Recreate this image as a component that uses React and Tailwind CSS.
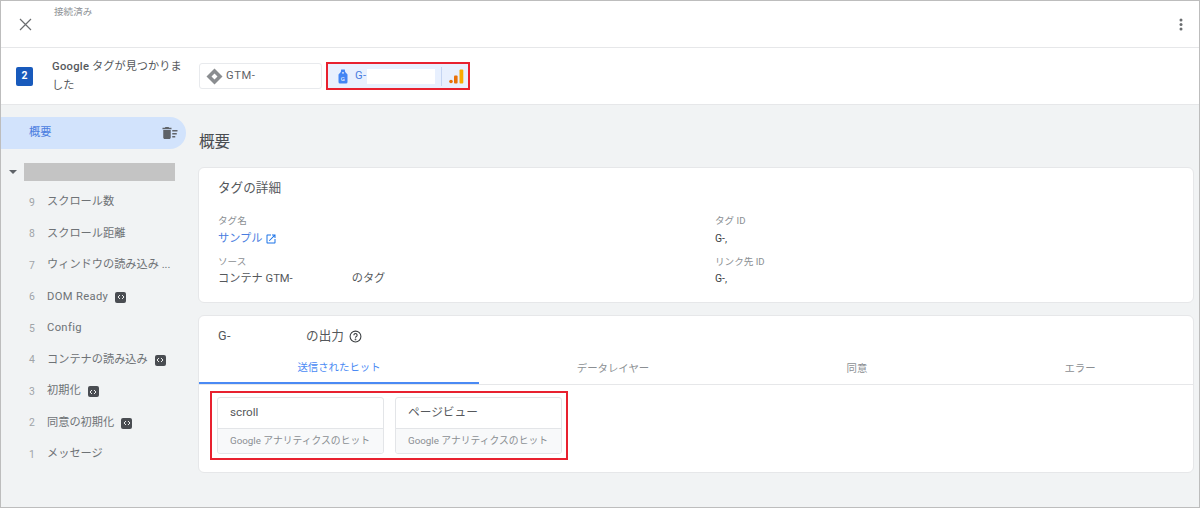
import React from "react";

const FONT = "font-['Roboto','Noto_Sans_CJK_JP',sans-serif]";

function Code() {
  return (
    <span className="ml-[7px] inline-flex h-[11px] w-[11px] items-center justify-center rounded-[2px] bg-[#4a4d52]">
      <svg width="8" height="6" viewBox="0 0 8 6" fill="none" stroke="#fff" strokeWidth="0.9">
        <path d="M3 1 1 3l2 2M5 1l2 2-2 2" />
      </svg>
    </span>
  );
}

function Item({ n, label, code, latin }) {
  return (
    <div className="flex h-[31.5px] items-center pl-[28px] text-[11.2px] text-[#6e7276]">
      <span className="w-[18px] text-[10.4px] text-[#a0a4a8]">{n}</span>
      <span className={latin ? "whitespace-nowrap tracking-[0.35px]" : "whitespace-nowrap"}>{label}</span>
      {code && <Code />}
    </div>
  );
}

function Hit({ title }) {
  return (
    <div className="flex h-[57px] w-[167px] flex-col overflow-hidden rounded-[3px] border border-[#e3e5e8] bg-white">
      <div className="flex h-[31px] items-center border-b border-[#e3e5e8] pl-[12px] text-[11.7px] text-[#55585c]">{title}</div>
      <div className="flex flex-1 items-center bg-[#f8f9fa] pl-[12px] text-[9.8px] text-[#8b8f93]">Google アナリティクスのヒット</div>
    </div>
  );
}

export default function App() {
  const items = [
    [9, "スクロール数"],
    [8, "スクロール距離"],
    [7, "ウィンドウの読み込み ..."],
    [6, "DOM Ready", true, true],
    [5, "Config", false, true],
    [4, "コンテナの読み込み", true],
    [3, "初期化", true],
    [2, "同意の初期化", true],
    [1, "メッセージ"],
  ];
  return (
    <div className={`${FONT} flex h-[508px] w-[1200px] flex-col border border-[#bdbdbd] bg-[#f1f3f4] text-[#3c4043]`}>
      <header className="flex h-[47px] items-center border-b border-[#e6e7e9] bg-white pl-[18px] pr-[16px]">
        <svg width="13" height="13" viewBox="0 0 13 13" stroke="#6a6d70" strokeWidth="1.2" fill="none">
          <path d="M1 1l11 11M12 1 1 12" />
        </svg>
        <span className="ml-[22px] -mt-[24px] text-[9.6px] text-[#909498]">接続済み</span>
        <svg className="ml-auto" width="4" height="13" viewBox="0 0 4 13" fill="#6a6d70">
          <circle cx="2" cy="2" r="1.5" />
          <circle cx="2" cy="6.5" r="1.5" />
          <circle cx="2" cy="11" r="1.5" />
        </svg>
      </header>

      <div className="flex h-[57px] items-center border-b border-[#e6e7e9] bg-white pl-[15px]">
        <span className="flex h-[19px] w-[17px] items-center justify-center rounded-[2px] bg-[#185abc] text-[10.4px] font-bold text-white">2</span>
        <div className="ml-[19px] w-[135px] text-[11.2px] leading-[19px] text-[#55585c]">
          <div className="whitespace-nowrap"><span className="font-medium tracking-[0.3px]">Google</span> タグが見つかりま</div>
          <div>した</div>
        </div>
        <div className="ml-[12px] flex h-[26px] w-[123px] items-center rounded-[3px] border border-[#e8eaed] pl-[6px] text-[11.2px] tracking-[0.6px] text-[#5f6368]">
          <svg width="17" height="17" viewBox="0 0 17 17" className="mr-[3px]">
            <path d="M8.500 0.500 16.500 8.500 8.500 16.500 0.500 8.500Z" fill="#8a8d90" />
            <path d="M8.500 5.500 11.500 8.500 8.500 11.500 5.500 8.500Z" fill="#fff" />
          </svg>
          GTM-
        </div>
        <div className="ml-[4px] flex h-[28px] w-[144px] items-center border-2 border-[#e8212f] bg-[#e8f0fe] pl-[10px] text-[11.2px] tracking-[0.4px] text-[#4a7de0]">
          <svg width="10" height="15" viewBox="0 0 10 15">
            <path d="M3.200 0.500h3.600L7.200 3 9.500 5.500V13a1.500 1.500 0 0 1-1.500 1.500H2A1.500 1.500 0 0 1 .5 13V5.500L2.800 3Z" fill="#4285f4" />
            <circle cx="5" cy="3.800" r=".9" fill="#e8f0fe" />
            <text x="5" y="12" fontSize="6" fill="#fff" textAnchor="middle">G</text>
          </svg>
          <span className="ml-[7px]">G-</span>
          <span className="h-[15px] w-[68px] bg-white" />
          <span className="ml-[6px] h-[19px] w-px bg-[#c5d5f2]" />
          <svg className="ml-[7px]" width="15" height="15" viewBox="0 0 15 15">
            <circle cx="2" cy="12.500" r="1.800" fill="#e8710a" />
            <rect x="5" y="6.500" width="3.600" height="8" rx="1" fill="#e8710a" />
            <rect x="10.500" y="0.500" width="3.800" height="14" rx="1" fill="#f9ab00" />
          </svg>
        </div>
      </div>

      <div className="flex min-h-0 flex-1">
        <aside className="w-[185px] shrink-0 pt-[12px]">
          <div className="flex h-[32px] items-center rounded-r-[16px] bg-[#d2e3fc] pl-[28px] pr-[7px] text-[11.2px] text-[#4a7de0]">
            概要
            <svg className="ml-auto" width="18" height="18" viewBox="0 0 24 24" fill="#5f6368">
              <path d="M15 16h4v2h-4zm0-8h7v2h-7zm0 4h6v2h-6zM3 18c0 1.100.9 2 2 2h6c1.100 0 2-.9 2-2V8H3v10zM14 5h-3l-1-1H6L5 5H2v2h12z" />
            </svg>
          </div>
          <div className="mt-[14px] flex h-[18px] items-center pl-[8px]">
            <span className="h-0 w-0 border-x-[4px] border-t-[4px] border-x-transparent border-t-[#5f6368]" />
            <span className="ml-[7px] h-[18px] w-[151px] bg-[#c4c4c4]" />
          </div>
          <div className="mt-[6px]">
            {items.map(([n, l, c, latin]) => (
              <Item key={n} n={n} label={l} code={c} latin={latin} />
            ))}
          </div>
        </aside>

        <main className="min-w-0 flex-1 pl-[13px] pr-[5px]">
          <h1 className="mt-[27px] text-[15.6px] leading-[20px] text-[#4a4d51]">概要</h1>
          <section className="mt-[15px] h-[136px] -ml-px rounded-[6px] border border-[#e6e7e9] bg-white pl-[19px]">
            <h2 className="mt-[11px] text-[12.6px] leading-[18px] text-[#55585c]">タグの詳細</h2>
            <div className="mt-[17px] grid grid-cols-[497px_1fr]">
              <div>
                <div className="text-[9.6px] leading-[14px] text-[#8b8f93]">タグ名</div>
                <div className="mt-[3px] flex h-[16px] items-center text-[11.2px] text-[#4a7de0]">
                  サンプル
                  <svg className="ml-[3px]" width="12" height="12" viewBox="0 0 24 24" fill="#1a73e8">
                    <path d="M19 19H5V5h7V3H5c-1.110 0-2 .9-2 2v14c0 1.100.89 2 2 2h14c1.100 0 2-.9 2-2v-7h-2v7zM14 3v2h3.590l-9.830 9.830 1.410 1.410L19 6.410V10h2V3h-7z" />
                  </svg>
                </div>
                <div className="mt-[8px] text-[9.6px] leading-[14px] text-[#8b8f93]">ソース</div>
                <div className="mt-[2px] flex h-[16px] items-center text-[11.2px] text-[#55585c]">
                  コンテナ GTM-<span className="ml-[59px]">のタグ</span>
                </div>
              </div>
              <div>
                <div className="text-[9.6px] leading-[14px] text-[#8b8f93]">タグ ID</div>
                <div className="mt-[3px] flex h-[16px] items-center text-[10.4px] text-[#3c4043]">G-,</div>
                <div className="mt-[8px] text-[9.6px] leading-[14px] text-[#8b8f93]">リンク先 ID</div>
                <div className="mt-[2px] flex h-[16px] items-center text-[10.4px] text-[#3c4043]">G-,</div>
              </div>
            </div>
          </section>
          <section className="mt-[12px] h-[158px] -ml-px rounded-[6px] border border-[#e6e7e9] bg-white">
            <div className="flex h-[38px] items-center pl-[19px] pt-[2px] text-[12.6px] text-[#55585c]">
              <span className="tracking-[0.5px]">G-</span><span className="ml-[75px]">の出力</span>
              <svg className="ml-[5px]" width="13" height="13" viewBox="0 0 24 24" fill="none" stroke="#3c4043" strokeWidth="2">
                <circle cx="12" cy="12" r="10" />
                <path d="M9 9.500a3 3 0 1 1 4.500 2.600c-1 .6-1.500 1.200-1.500 2.400" />
                <circle cx="12" cy="17.500" r=".6" />
              </svg>
            </div>
            <div className="flex h-[31px] border-b border-[#e6e7e9] text-[10.4px] text-[#8b8f93]">
              <div className="flex w-[280px] items-center justify-center border-b-2 border-[#4a8af4] text-[#4a8af4]">送信されたヒット</div>
              <div className="flex w-[268px] items-center justify-center">データレイヤー</div>
              <div className="flex w-[220px] items-center justify-center">同意</div>
              <div className="flex flex-1 items-center justify-center">エラー</div>
            </div>
            <div className="ml-[11px] mt-[6px] flex h-[69px] w-[358px] items-center gap-[11px] border-2 border-[#e8212f] pl-[5px]">
              <Hit title="scroll" />
              <Hit title="ページビュー" />
            </div>
          </section>
        </main>
      </div>
    </div>
  );
}
